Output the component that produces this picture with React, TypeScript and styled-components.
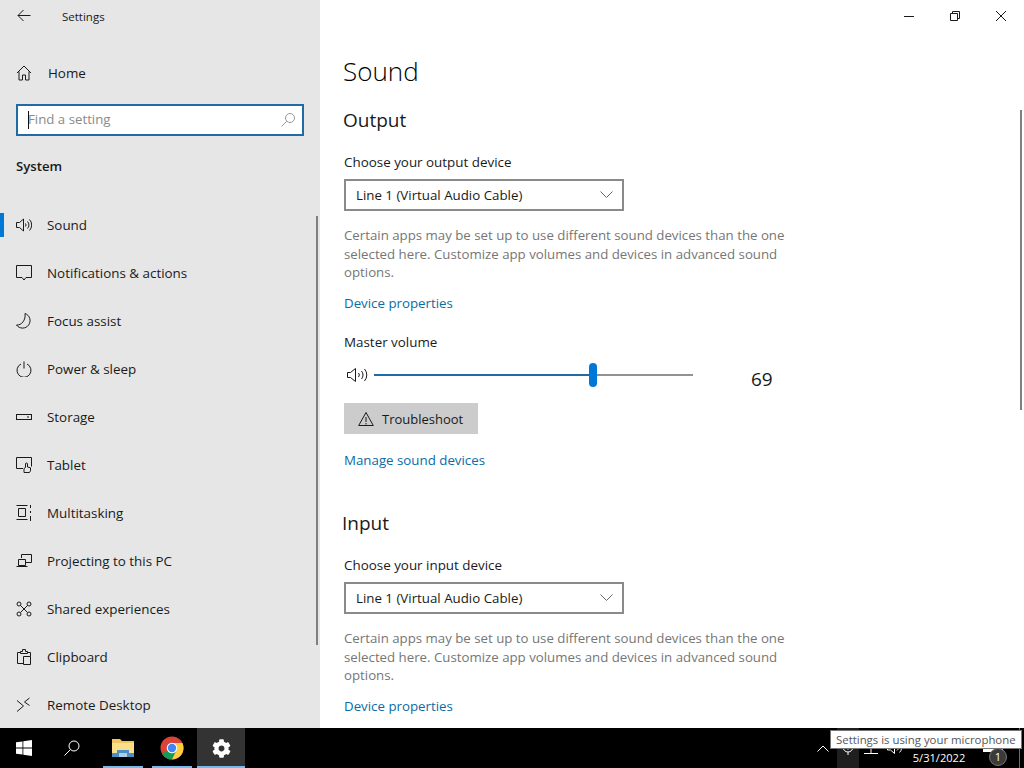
import React from 'react';
import styled, { createGlobalStyle } from 'styled-components';
import { FaCog } from 'react-icons/fa';

const GlobalStyle = createGlobalStyle`
  html, body {
    margin: 0;
    padding: 0;
    background: #fff;
  }
  body {
    font-family: "Open Sans", "Liberation Sans", sans-serif;
    color: #1a1a1a;
  }
`;

const Screen = styled.div`
  position: relative;
  width: 1024px;
  height: 768px;
  overflow: hidden;
  display: flex;
  flex-direction: column;
`;
const Win = styled.div`
  display: flex;
  height: 728px;
  flex: none;
`;

/* left pane */
const Sidebar = styled.aside`
  position: relative;
  width: 320px;
  flex: none;
  background: #e6e6e6;
  overflow: hidden;
`;
const TitleRow = styled.div`
  display: flex;
  align-items: center;
  height: 32px;
  padding-left: 16px;
`;
const AppTitle = styled.span`
  margin-left: 30px;
  font-size: 11.5px;
`;
const HomeRow = styled.div`
  display: flex;
  align-items: center;
  height: 32px;
  margin-top: 25px;
  padding-left: 16px;
  gap: 16px;
  font-size: 13.4px;
`;
const RowLabel = styled.span`
  display: block;
  height: 20px;
  line-height: 20px;
`;
const SearchBox = styled.div`
  position: relative;
  box-sizing: border-box;
  display: flex;
  align-items: center;
  justify-content: space-between;
  width: 288px;
  height: 32px;
  margin: 15px 0 0 16px;
  padding: 0 6px 0 10px;
  background: #fff;
  border: 2px solid #1f6ba5;
  color: #8a8a8a;
  font-size: 13.25px;
`;
const SearchHint = styled.span`
  padding-bottom: 3px;
`;
const Caret = styled.span`
  position: absolute;
  left: 10px;
  top: 5px;
  width: 1px;
  height: 18px;
  background: #111;
`;
const GroupTitle = styled.div`
  margin: 20px 0 0 16px;
  height: 20px;
  line-height: 20px;
  font-size: 13.2px;
  font-weight: 600;
`;
const NavList = styled.nav`
  margin-top: 25px;
`;
const NavRow = styled.div<{ $active?: boolean }>`
  position: relative;
  display: flex;
  align-items: center;
  height: 48px;
  padding-left: 16px;
  gap: 15px;
  font-size: 13.4px;
  &::before {
    content: '';
    display: ${(p) => (p.$active ? 'block' : 'none')};
    position: absolute;
    left: 0;
    top: 12px;
    width: 4px;
    height: 24px;
    background: #0078d7;
  }
`;
const PaneScroll = styled.div`
  position: absolute;
  right: 2px;
  top: 216px;
  width: 2px;
  height: 429px;
  background: #7f7f7f;
`;

/* right pane */
const Main = styled.main`
  position: relative;
  flex: 1;
  background: #fff;
  overflow: hidden;
  padding: 51px 0 0 24px;
`;
const WindowButtons = styled.div`
  position: absolute;
  top: 0;
  right: 0;
  display: flex;
`;
const WindowButton = styled.div`
  width: 46px;
  height: 32px;
  display: flex;
  align-items: center;
  justify-content: center;
`;
const MainScroll = styled.div`
  position: absolute;
  right: 2px;
  top: 110px;
  width: 2px;
  height: 300px;
  background: #7f7f7f;
`;
const PageTitle = styled.h1`
  margin: 0 0 0 -1px;
  height: 40px;
  line-height: 40px;
  font-size: 26px;
  font-weight: 300;
  color: #000;
`;
const SectionTitle = styled.h2<{ $top: number; $shift?: number }>`
  margin: ${(p) => p.$top}px 0 0 ${(p) => p.$shift ?? -1}px;
  height: 28px;
  line-height: 28px;
  font-size: 19px;
  font-weight: 400;
`;
const Label = styled.div<{ $top: number }>`
  margin-top: ${(p) => p.$top}px;
  height: 20px;
  line-height: 20px;
  font-size: 13.4px;
`;
const Select = styled.div`
  box-sizing: border-box;
  display: flex;
  align-items: center;
  justify-content: space-between;
  width: 280px;
  height: 32px;
  margin-top: 7px;
  padding: 0 9px 0 10px;
  border: 2px solid #8a8a8a;
  font-size: 13.3px;
`;
const Help = styled.p`
  width: 450px;
  height: 56px;
  margin: 15px 0 0;
  font-size: 13.25px;
  line-height: 18.5px;
  color: #767676;
`;
const TextLink = styled.a<{ $top: number }>`
  display: block;
  margin-top: ${(p) => p.$top}px;
  height: 20px;
  line-height: 20px;
  font-size: 13.3px;
  color: #0a6ca5;
`;
const SliderRow = styled.div`
  display: flex;
  align-items: center;
  height: 24px;
  margin-top: 11px;
  margin-left: 3px;
`;
const Track = styled.div`
  position: relative;
  width: 319px;
  height: 2px;
  margin-left: 5px;
  background: #929292;
`;
const TrackFill = styled.div`
  height: 100%;
  background: #1f6ba5;
`;
const Thumb = styled.div`
  position: absolute;
  top: -11px;
  width: 8px;
  height: 24px;
  margin-left: -4px;
  border-radius: 4px;
  background: #0078d7;
`;
const Value = styled.span`
  margin: 8px 0 0 58px;
  font-size: 19px;
`;
const Button = styled.div`
  box-sizing: border-box;
  display: flex;
  align-items: center;
  gap: 8px;
  width: 134px;
  height: 31px;
  margin-top: 16px;
  padding-left: 14px;
  background: #cccccc;
  font-size: 13px;
`;

/* taskbar */
const Taskbar = styled.footer`
  position: relative;
  height: 40px;
  flex: none;
  background: #000;
  display: flex;
  color: #fff;
`;
const TaskSlot = styled.div<{ $before?: number; $on?: boolean; $running?: boolean; $inset?: number }>`
  position: relative;
  width: 48px;
  height: 40px;
  margin-left: ${(p) => p.$before ?? 0}px;
  display: flex;
  align-items: center;
  justify-content: center;
  background: ${(p) => (p.$on ? '#333333' : 'transparent')};
  &::after {
    content: '';
    display: ${(p) => (p.$running ? 'block' : 'none')};
    position: absolute;
    bottom: 0;
    left: ${(p) => p.$inset ?? 0}px;
    right: ${(p) => p.$inset ?? 0}px;
    height: 2px;
    background: #76b9ed;
  }
`;
const Tray = styled.div`
  display: flex;
  align-items: center;
  margin-left: auto;
  height: 40px;
  padding-right: 4px;
`;
const TrayChevron = styled.div`
  width: 24px;
  display: flex;
  justify-content: center;
`;
const MicSlot = styled.div`
  width: 22px;
  height: 40px;
  margin-left: 2px;
  background: #1f1f1f;
  display: flex;
  align-items: center;
  justify-content: center;
`;
const TrayIcon = styled.div<{ $w: number }>`
  width: ${(p) => p.$w}px;
  display: flex;
  justify-content: center;
`;
const DateText = styled.div`
  width: 64px;
  text-align: center;
  font-size: 11.1px;
  padding-top: 18px;
`;
const Notif = styled.div`
  position: relative;
  width: 48px;
  height: 40px;
  display: flex;
  justify-content: center;
`;
const NotifBubble = styled.svg`
  position: absolute;
  left: 12px;
  top: 4px;
`;
const NotifCount = styled.span`
  position: absolute;
  left: 18px;
  top: 20px;
  width: 18px;
  height: 18px;
  border-radius: 50%;
  background: #3a3a3a;
  border: 1px solid #777;
  box-sizing: border-box;
  text-align: center;
  font-size: 11px;
  line-height: 16px;
`;
const DesktopEdge = styled.div`
  width: 1px;
  height: 40px;
  background: #6a6a6a;
`;
const Tooltip = styled.div`
  position: absolute;
  left: 830px;
  bottom: 19px;
  box-sizing: border-box;
  width: 192px;
  height: 19px;
  padding-left: 5px;
  background: #fff;
  border: 1px solid #767676;
  color: #575757;
  font-size: 11.4px;
  line-height: 17px;
  white-space: nowrap;
`;

const Ico = styled.svg`
  flex: none;
  display: block;
  fill: none;
  stroke: currentColor;
  stroke-width: 1;
`;

const glyph = (children: React.ReactNode, size = 16) => (
  <Ico width={size} height={size} viewBox="0 0 16 16">{children}</Ico>
);

const speaker = glyph(
  <>
    <path d="M.5 5.500h3l4-3.500v12l-4-3.500h-3z" />
    <path d="M9.500 6.500a2.500 2.500 0 0 1 0 3M11.500 4.500a5 5 0 0 1 0 7M13.500 2.500a8 8 0 0 1 0 11" />
  </>
);

const navItems: { label: string; icon: React.ReactNode }[] = [
  { label: 'Sound', icon: speaker },
  {
    label: 'Notifications & actions',
    icon: glyph(<path d="M.5 .5h15v12H10l-2 2.500-2-2.500H.5z" />),
  },
  {
    label: 'Focus assist',
    icon: glyph(<path d="M9 .5A7.500 7.500 0 1 1 .5 12C5.500 12.500 10 7 9 .5z" />),
  },
  {
    label: 'Power & sleep',
    icon: glyph(
      <>
        <path d="M5 3a7 7 0 1 0 6 0" />
        <path d="M8 .5v7" />
      </>
    ),
  },
  {
    label: 'Storage',
    icon: glyph(
      <>
        <rect x=".5" y="5.500" width="15" height="5" />
        <path d="M11 8h2" />
      </>
    ),
  },
  {
    label: 'Tablet',
    icon: glyph(
      <>
        <path d="M7 11.500H.5V.5h15v9" />
        <path d="M8 15.500v-4l1.500-1V7a1 1 0 0 1 2 0v3l3 .8v3l-1 1.700z" />
      </>
    ),
  },
  {
    label: 'Multitasking',
    icon: glyph(
      <path d="M.5 .5h11M.5 14.500h11M2.500 3.500h7v8h-7zM14.500 0v3M14.500 6v2M14.500 11v5" />
    ),
  },
  {
    label: 'Projecting to this PC',
    icon: glyph(
      <>
        <path d="M5.500 5V1.500h10v8H10" />
        <path d="M2.500 6.500h7v6h-7zM.5 13.500h11" />
      </>
    ),
  },
  {
    label: 'Shared experiences',
    icon: glyph(
      <>
        <circle cx="3" cy="3" r="2" />
        <circle cx="13" cy="3" r="2" />
        <circle cx="3" cy="13" r="2" />
        <circle cx="13" cy="13" r="2" />
        <path d="M4.500 4.500l7 7M11.500 4.500l-7 7" />
      </>
    ),
  },
  {
    label: 'Clipboard',
    icon: glyph(
      <>
        <path d="M1.500 14.500V3.500h3M11.500 3.500h3v4M7.500 7.500h7v8h-7zM7.500 14.500h-6" />
        <path d="M4.500 4.500V2.500h2V.5h3v2h2v2z" />
      </>
    ),
  },
  {
    label: 'Remote Desktop',
    icon: glyph(
      <>
        <path d="M1 3.500l6.500 5.500L1 14.500" />
        <path d="M13.500 1L8.500 5l5 3.500" />
      </>
    ),
  },
];

const DeviceSection = ({ label, top }: { label: string; top: number }) => (
  <>
    <Label $top={top}>{label}</Label>
    <Select>
      <span>Line 1 (Virtual Audio Cable)</span>
      <Ico width="13" height="8" viewBox="0 0 13 8" style={{ color: '#666' }}>
        <path d="M.5 .5L6.500 6.500l6-6" />
      </Ico>
    </Select>
    <Help>
      Certain apps may be set up to use different sound devices than the one
      selected here. Customize app volumes and devices in advanced sound
      options.
    </Help>
  </>
);

const ChromeLogo = () => (
  <svg width="24" height="24" viewBox="0 0 24 24">
    <circle cx="12" cy="12" r="11.500" fill="#db4437" />
    <path d="M12 12L2.040 17.750A11.500 11.500 0 0 0 12 23.500L17.750 13.500z" fill="#0f9d58" />
    <path d="M12 7h10.400A11.500 11.500 0 0 1 12 23.500L17 13z" fill="#ffcd40" />
    <circle cx="12" cy="12" r="5.300" fill="#fff" />
    <circle cx="12" cy="12" r="4.200" fill="#4285f4" />
  </svg>
);

const App = () => (
  <Screen>
    <GlobalStyle />
    <Win>
      <Sidebar>
        <TitleRow>
          <Ico width="16" height="16" viewBox="0 0 16 16">
            <path d="M14.500 7.500H2M7.500 2L2 7.500 7.500 13" />
          </Ico>
          <AppTitle>Settings</AppTitle>
        </TitleRow>
        <HomeRow>
          {glyph(<path d="M1 8L8 1l7 7M3 6.500v8.500h3.500v-5h3v5H13V6.500" />)}
          <RowLabel>Home</RowLabel>
        </HomeRow>
        <SearchBox>
          <Caret />
          <SearchHint>Find a setting</SearchHint>
          <Ico width="16" height="16" viewBox="0 0 16 16" style={{ color: '#9a9a9a' }}>
            <circle cx="10" cy="6" r="4.500" />
            <path d="M6.800 9.200L1.500 14.500" />
          </Ico>
        </SearchBox>
        <GroupTitle>System</GroupTitle>
        <NavList>
          {navItems.map((item, i) => (
            <NavRow key={item.label} $active={i === 0}>
              {item.icon}
              <RowLabel>{item.label}</RowLabel>
            </NavRow>
          ))}
        </NavList>
        <PaneScroll />
      </Sidebar>
      <Main>
        <WindowButtons>
          <WindowButton>
            <Ico width="10" height="10" viewBox="0 0 10 10"><path d="M0 5.500h10" /></Ico>
          </WindowButton>
          <WindowButton>
            <Ico width="10" height="10" viewBox="0 0 10 10">
              <path d="M.5 2.500h7v7h-7zM2.500 2.500v-2h7v7h-2" />
            </Ico>
          </WindowButton>
          <WindowButton>
            <Ico width="10" height="10" viewBox="0 0 10 10"><path d="M0 0l10 10M10 0L0 10" /></Ico>
          </WindowButton>
        </WindowButtons>
        <PageTitle>Sound</PageTitle>
        <SectionTitle $top={15}>Output</SectionTitle>
        <DeviceSection label="Choose your output device" top={18} />
        <TextLink $top={11}>Device properties</TextLink>
        <Label $top={19}>Master volume</Label>
        <SliderRow>
          <Ico width="22" height="16" viewBox="0 0 22 16">
            <path d="M.5 5.500h3l5-4v13l-5-4h-3z" />
            <path d="M11.500 6a3 3 0 0 1 0 4M14.500 4a6 6 0 0 1 0 8M17.500 2a9 9 0 0 1 0 12" />
          </Ico>
          <Track>
            <TrackFill style={{ width: `${(219 / 319) * 100}%` }} />
            <Thumb style={{ left: `${(219 / 319) * 100}%` }} />
          </Track>
          <Value>69</Value>
        </SliderRow>
        <Button>
          <Ico width="16" height="16" viewBox="0 0 16 16">
            <path d="M8 1.500L15.300 14.500H.7zM8 6v5M8 12v1.500" />
          </Ico>
          <span>Troubleshoot</span>
        </Button>
        <TextLink $top={16}>Manage sound devices</TextLink>
        <SectionTitle $top={39} $shift={-2}>Input</SectionTitle>
        <DeviceSection label="Choose your input device" top={18} />
        <TextLink $top={11}>Device properties</TextLink>
        <MainScroll />
      </Main>
    </Win>
    <Taskbar>
      <TaskSlot>
        <svg width="16" height="16" viewBox="0 0 16 16" fill="#fff">
          <path d="M0 2.300l6.500-.9v6.200H0zM7.300 1.300L16 0v7.600H7.300zM0 8.400h6.500v6.200L0 13.700zM7.300 8.400H16V16l-8.700-1.300z" />
        </svg>
      </TaskSlot>
      <TaskSlot>
        <Ico width="16" height="16" viewBox="0 0 16 16">
          <circle cx="10" cy="6" r="5" />
          <path d="M6.500 9.500L.5 15.500" />
        </Ico>
      </TaskSlot>
      <TaskSlot $before={3} $running $inset={4}>
        <svg width="22" height="20" viewBox="0 0 22 20">
          <path d="M0 1h8l2 2h12v16H0z" fill="#f0c75e" />
          <path d="M0 5h22v14H0z" fill="#fbdf8a" />
          <path d="M0 15h5v-3h12v3h5v4H0z" fill="#4a90c8" />
          <path d="M7 15h8v4H7z" fill="#a8d0ea" />
        </svg>
      </TaskSlot>
      <TaskSlot $before={1} $running $inset={4}>
        <ChromeLogo />
      </TaskSlot>
      <TaskSlot $before={1} $on $running>
        <FaCog size={19} color="#fff" />
      </TaskSlot>
      <Tray>
        <TrayChevron>
          <Ico width="12" height="7" viewBox="0 0 12 7"><path d="M.5 6.500L6 1l5.500 5.500" /></Ico>
        </TrayChevron>
        <MicSlot>
          <Ico width="12" height="16" viewBox="0 0 12 16">
            <rect x="3.500" y="1" width="5" height="8" rx="2.500" fill="#fff" />
            <path d="M1 7a5 5 0 0 0 10 0M6 12v3" />
          </Ico>
        </MicSlot>
        <TrayIcon $w={24}>
          <Ico width="16" height="14" viewBox="0 0 16 14"><path d="M3 .5h10v7H3zM8 7.500v5M1 12.500h14M1 5h14" /></Ico>
        </TrayIcon>
        <TrayIcon $w={24}>
          <Ico width="16" height="14" viewBox="0 0 16 14"><path d="M.5 5h3l4-3.500v11l-4-3.500h-3zM10 4.500a3 3 0 0 1 0 5M12.500 2.500a6 6 0 0 1 0 9" /></Ico>
        </TrayIcon>
        <DateText>5/31/2022</DateText>
        <Notif>
          <NotifBubble width="20" height="24" viewBox="0 0 20 24" fill="#fff"><path d="M0 0h20v20H0z" /></NotifBubble>
          <NotifCount>1</NotifCount>
        </Notif>
        <DesktopEdge />
      </Tray>
      <Tooltip>Settings is using your microphone</Tooltip>
    </Taskbar>
  </Screen>
);

export default App;
